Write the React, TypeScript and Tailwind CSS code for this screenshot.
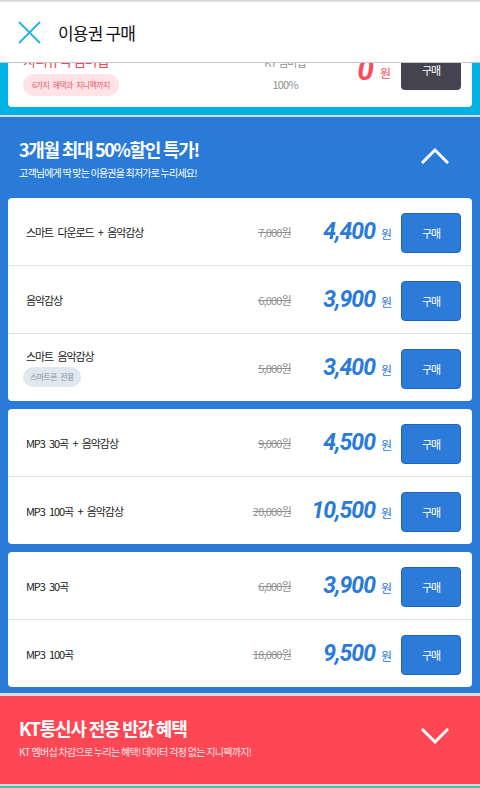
import React from "react";

interface Plan {
    name: string;
    orig: string;
    price: string;
    tag?: string;
}

const groups: Plan[][] = [
    [
        { name: "스마트 다운로드 + 음악감상", orig: "7,000원", price: "4,400" },
        { name: "음악감상", orig: "6,000원", price: "3,900" },
        { name: "스마트 음악감상", orig: "5,000원", price: "3,400", tag: "스마트폰 전용" },
    ],
    [
        { name: "MP3 30곡 + 음악감상", orig: "9,000원", price: "4,500" },
        { name: "MP3 100곡 + 음악감상", orig: "20,000원", price: "10,500" },
    ],
    [
        { name: "MP3 30곡", orig: "6,000원", price: "3,900" },
        { name: "MP3 100곡", orig: "18,000원", price: "9,500" },
    ],
];

const Chevron: React.FC<{ up?: boolean }> = ({ up }) => (
    <svg width="28" height="17" viewBox="0 0 28 17" fill="none">
        <polyline
            points={up ? "2,15 14,3 26,15" : "2,2 14,14 26,2"}
            stroke="white"
            strokeWidth="3"
            strokeLinecap="square"
        />
    </svg>
);

const PlanRow: React.FC<{ plan: Plan }> = ({ plan }) => (
    <div className="h-[67px] flex items-center pl-[18px] pr-[11px]">
        <div className="flex-1 flex flex-col items-start">
            <span className="text-[11px] tracking-[-1.1px] [word-spacing:3px] text-[#1a1a1a] leading-4">{plan.name}</span>
            {plan.tag && (
                <span className="mt-[3px] -ml-[3px] h-[20px] px-[7px] rounded-full bg-[#dfe8ee] text-[#8496a4] text-[8px] tracking-[-0.6px] [word-spacing:2px] flex items-center">
                    {plan.tag}
                </span>
            )}
        </div>
        <span className="text-[11px] tracking-[-0.8px] text-[#8f8f8f] line-through mt-[2px]">{plan.orig}</span>
        <span className="w-[84px] text-right font-['Roboto',sans-serif] font-bold italic text-[23px] tracking-[-1px] text-[#2a7ad8] leading-none">
            {plan.price}
        </span>
        <span className="ml-[6px] mt-[5px] text-[12px] text-[#2a7ad8]">원</span>
        <button className="ml-[9px] w-[60px] h-[40px] mt-[3px] rounded-[4px] bg-[#2c7bd9] border border-[#1d64bd] text-white text-[11px] tracking-[-1px]">
            구매
        </button>
    </div>
);

const App: React.FC = () => {
    return (
        <div className="w-[480px] h-[788px] overflow-hidden bg-white font-['Noto_Sans_CJK_KR',sans-serif]">
            {/* header */}
            <div className="h-[63px] bg-white border-b border-[#c9c9c9] relative">
                <div className="h-[3px] bg-linear-to-b from-[#cfcfcf] to-white" />
                <div className="flex items-center h-[59px] pl-[18px]">
                    <svg width="23" height="23" viewBox="0 0 23 23" fill="none">
                        <line x1="1" y1="1" x2="22" y2="22" stroke="#27b4e6" strokeWidth="2" />
                        <line x1="22" y1="1" x2="1" y2="22" stroke="#27b4e6" strokeWidth="2" />
                    </svg>
                    <span className="ml-[17px] text-[17px] tracking-[-0.8px] text-[#111]">이용권 구매</span>
                </div>
            </div>

            {/* scrolled membership card */}
            <div className="h-[52px] bg-[#00b3e4] px-2 pb-2 flex flex-col justify-end overflow-hidden">
                <div className="shrink-0 h-[68px] bg-white rounded-[4px] flex items-center pl-[15px] pr-[11px]">
                    <div className="w-[190px] flex flex-col items-start">
                        <span className="text-[14px] tracking-[-1px] text-[#f04a5a] leading-5">지니뮤직 멤버십</span>
                        <span className="mt-[4px] h-[22px] px-[9px] rounded-full bg-[#ffe3e6] text-[#e2606e] text-[8px] tracking-[-0.6px] [word-spacing:2px] flex items-center">
                            6가지 혜택과 지니팩까지
                        </span>
                    </div>
                    <div className="flex-1 flex flex-col items-center text-[11px] tracking-[-0.8px] text-[#8f8f8f] leading-4">
                        <span>KT 멤버십</span>
                        <span className="mt-[6px]">100%</span>
                    </div>
                    <span className="font-['Roboto',sans-serif] font-bold italic text-[30px] text-[#fd4a5a] leading-none -mt-[6px]">0</span>
                    <span className="ml-[6px] text-[12px] text-[#fd4a5a]">원</span>
                    <button className="ml-[10px] w-[60px] h-[38px] -mt-[5px] rounded-[4px] bg-[#45434f] text-white text-[11px] tracking-[-1px]">
                        구매
                    </button>
                </div>
            </div>
            <div className="h-[2px] bg-[#dcdcdc]" />

            {/* discount section */}
            <div className="bg-[#2a7bd8] px-2 pb-[6px]">
                <div className="h-[81px] flex items-start justify-between pl-[11px] pr-[23px] pt-[20px]">
                    <div className="flex flex-col">
                        <span className="text-[18px] font-bold tracking-[-1.3px] text-white leading-6">3개월 최대 50%할인 특가!</span>
                        <span className="mt-[5px] text-[10px] tracking-[-0.8px] text-white leading-[14px]">고객님에게 딱 맞는 이용권을 최저가로 누리세요!</span>
                    </div>
                    <div className="mt-[10px]">
                        <Chevron up />
                    </div>
                </div>
                <div className="flex flex-col gap-2">
                    {groups.map((group, gi) => (
                        <div key={gi} className="bg-white rounded-[4px] overflow-hidden">
                            {group.map((plan, pi) => (
                                <div key={pi}>
                                    {pi > 0 && <div className="h-px bg-[#e2e2e2]" />}
                                    <PlanRow plan={plan} />
                                </div>
                            ))}
                        </div>
                    ))}
                </div>
            </div>
            <div className="h-[3px] bg-[#dcdcdc]" />

            {/* kt section */}
            <div className="h-[88px] bg-[#fd4755] flex items-start justify-between pl-[19px] pr-[31px] pt-[20px]">
                <div className="flex flex-col">
                    <span className="text-[18px] font-bold tracking-[-1.2px] text-white leading-6">KT통신사 전용 반값 혜택</span>
                    <span className="mt-[5px] text-[10px] tracking-[-0.7px] text-[#ffe3e6] leading-[14px]">KT 멤버십 차감으로 누리는 혜택! 데이터 걱정 없는 지니팩까지!</span>
                </div>
                <div className="mt-[12px]">
                    <Chevron />
                </div>
            </div>
            <div className="h-[2px] bg-[#dcdcdc]" />
            <div className="h-[10px] bg-[#3cc4a6]" />
        </div>
    );
};

export default App;
